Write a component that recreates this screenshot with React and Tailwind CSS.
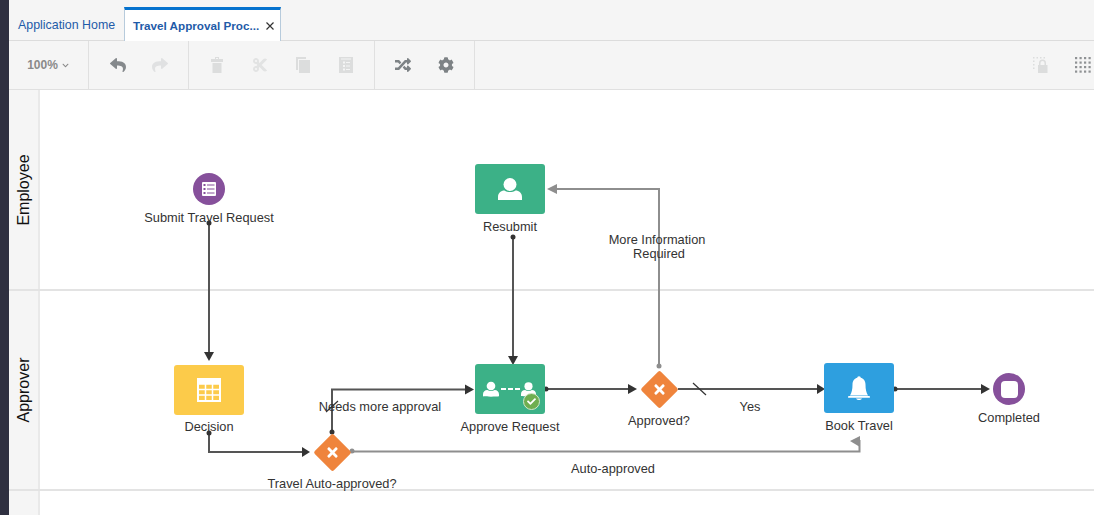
import React from 'react';
import { FaReply, FaShare, FaCut, FaRandom, FaCog, FaTimes, FaCheck, FaChevronDown } from 'react-icons/fa';

const FONT = "font-['Liberation_Sans',Arial,sans-serif]";

function Person({ className }) {
  return (
    <svg viewBox="0 0 24 22" className={className} fill="currentColor">
      <circle cx="12" cy="6.500" r="6.500" />
      <path d="M0 22v-3c0-4 3-6.500 6.500-6.500 1.500 1 3.500 1.500 5.500 1.500s4-.5 5.500-1.500c3.500 0 6.500 2.500 6.500 6.500v3c-4 .6-20 .6-24 0z" />
    </svg>
  );
}

function ListIcon({ className }) {
  return (
    <svg viewBox="0 0 14 14" className={className}>
      <rect x="0" y="0" width="14" height="14" rx="1" fill="#fff" />
      <rect x="1.500" y="2" width="2" height="2" fill="#86509b" />
      <rect x="1.500" y="6" width="2" height="2" fill="#86509b" />
      <rect x="1.500" y="10" width="2" height="2" fill="#86509b" />
      <rect x="5" y="2.500" width="7.500" height="1" fill="#86509b" />
      <rect x="5" y="6.500" width="7.500" height="1" fill="#86509b" />
      <rect x="5" y="10.500" width="7.500" height="1" fill="#86509b" />
    </svg>
  );
}

function TableIcon({ className }) {
  return (
    <svg viewBox="0 0 24 24" className={className}>
      <rect x="0" y="0" width="24" height="24" fill="#fff" />
      <rect x="2" y="6" width="20" height="16" fill="#fccb4a" />
      <path d="M2 6h20M2 11.500h20M2 17h20M8.500 6v16M15.500 6v16" stroke="#fff" strokeWidth="1.500" />
    </svg>
  );
}

function Bell({ className }) {
  return (
    <svg viewBox="0 0 22 24" className={className} fill="currentColor">
      <circle cx="11" cy="2" r="1.800" />
      <path d="M11 1.500c4 0 6.500 3 6.500 7 0 5 .8 8 2.500 11H2c1.700-3 2.500-6 2.500-11 0-4 2.500-7 6.500-7z" />
      <rect x="0" y="20" width="22" height="1.800" rx=".9" />
      <path d="M8 22.500h6c-.8 1-1.800 1.500-3 1.500s-2.200-.5-3-1.500z" />
    </svg>
  );
}

function TrashIcon({ className }) {
  return (
    <svg viewBox="0 0 16 16" className={className} fill="currentColor">
      <path fillRule="evenodd" d="M6 0h4v2h4v3H2V2h4zM7 1v1h2V1z" />
      <rect x="3.500" y="6" width="9" height="10" />
    </svg>
  );
}

function CopyIcon({ className }) {
  return (
    <svg viewBox="0 0 16 16" className={className} fill="currentColor">
      <path d="M1 0h10v2H3v11H1z" />
      <rect x="4" y="3" width="11" height="13" />
    </svg>
  );
}

function PasteIcon({ className }) {
  return (
    <svg viewBox="0 0 16 16" className={className} fill="currentColor">
      <path fillRule="evenodd" d="M1 0h14v16H1zM3 1.500v1h10v-1zM5 4.500v2h2v-2zM8 5v1h4V5zM5 8v2h2V8zM8 8.500v1h4v-1zM5 11.500v2h2v-2zM8 12v1h4v-1z" />
    </svg>
  );
}

function DotGrid({ className }) {
  const dots = [1, 5.500, 10, 14.500];
  return (
    <svg viewBox="0 0 16 16" className={className} fill="currentColor">
      {dots.map((y) => dots.map((x) => <rect key={`${x}-${y}`} x={x - 1} y={y - 1} width="2.200" height="2.200" />))}
    </svg>
  );
}

function LockGrid({ className }) {
  return (
    <svg viewBox="0 0 16 16" className={className} fill="currentColor">
      {[0, 3.500, 7, 10.500].map((x) => <rect key={x} x={x} y="0" width="1.500" height="1.500" />)}
      {[3.500, 7, 10.500].map((y) => <rect key={y} x="0" y={y} width="1.500" height="1.500" />)}
      <path fillRule="evenodd" d="M5 8h1V6a3.500 3.500 0 0 1 7 0v2h1.500v8H5zM7.500 8h4V6a2 2 0 0 0-4 0z" />
    </svg>
  );
}

function Diamond({ className }) {
  return (
    <div className={`absolute flex h-[27px] w-[27px] rotate-45 items-center justify-center rounded-[2px] bg-[#ef843c] ${className}`}>
      <FaTimes className="-rotate-45 text-[15px] text-white" />
    </div>
  );
}

function Label({ className, children }) {
  return (
    <div className={`absolute -translate-x-1/2 whitespace-nowrap text-center text-[12.8px] leading-[14px] text-[#333] ${className}`}>
      {children}
    </div>
  );
}

function Connectors() {
  const dark = '#555';
  const grey = '#8e8e8e';
  return (
    <svg viewBox="9 90 1085 425" className="absolute inset-0 h-full w-full">
      <g fill="none" stroke={grey} strokeWidth="2">
        <path d="M352 451.500H859.500V440" />
        <path d="M659 366V189H552" />
      </g>
      <g fill="none" stroke={dark} strokeWidth="2">
        <path d="M209 223V352" />
        <path d="M209 433V452H304" />
        <path d="M332 432V389.500H466" />
        <path d="M513 237V356" />
        <path d="M546 389H630" />
        <path d="M678 389H818" />
        <path d="M895 389H983" />
      </g>
      <g stroke="#333" strokeWidth="1.200">
        <path d="M326 412L338 401" />
        <path d="M693 383L706 395" />
      </g>
      <g fill="#333">
        <circle cx="209" cy="223" r="2.500" />
        <circle cx="209" cy="433" r="2.500" />
        <circle cx="332" cy="432" r="2.500" />
        <circle cx="513" cy="237" r="2.500" />
        <circle cx="546" cy="389" r="2.500" />
        <circle cx="895" cy="389" r="2.500" />
        <path d="M204 352h10l-5 9z" />
        <path d="M302 447v10l8-5z" />
        <path d="M465 384.500v10l9-5z" />
        <path d="M508 356h10l-5 9z" />
        <path d="M628 384v10l9-5z" />
        <path d="M817 384v10l8-5z" />
        <path d="M981 384v10l9-5z" />
      </g>
      <g fill={grey}>
        <circle cx="659" cy="366" r="2.500" />
        <circle cx="352" cy="451" r="2.500" />
        <path d="M557 184v10l-10-5z" />
        <path d="M860 436v11l-10-6z" />
      </g>
    </svg>
  );
}

function Diagram() {
  return (
    <div className="absolute inset-0">
      <Connectors />

      <div className="absolute left-[184px] top-[83px] flex h-[32px] w-[32px] items-center justify-center rounded-full bg-[#86509b]">
        <ListIcon className="h-[14px] w-[14px]" />
      </div>
      <Label className="left-[200px] top-[121px]">Submit Travel Request</Label>

      <div className="absolute left-[466px] top-[74px] flex h-[50px] w-[70px] items-center justify-center rounded-[3px] bg-[#3cb187]">
        <Person className="h-[22px] w-[24px] text-white" />
      </div>
      <Label className="left-[501px] top-[130px]">Resubmit</Label>

      <div className="absolute left-[165px] top-[275px] flex h-[50px] w-[70px] items-center justify-center rounded-[3px] bg-[#fccb4a]">
        <TableIcon className="h-[24px] w-[24px]" />
      </div>
      <Label className="left-[200px] top-[330px]">Decision</Label>

      <div className="absolute left-[466px] top-[274px] flex h-[50px] w-[70px] items-center rounded-[3px] bg-[#3cb187] pl-[8px]">
        <div className="flex items-center text-white">
          <Person className="h-[16px] w-[16px]" />
          <div className="ml-[2px] flex gap-[2px]">
            <div className="h-[2px] w-[5px] bg-white" />
            <div className="h-[2px] w-[5px] bg-white" />
            <div className="h-[2px] w-[5px] bg-white" />
          </div>
          <Person className="ml-[1px] h-[16px] w-[15px]" />
        </div>
        <div className="absolute left-[48px] top-[29px] flex h-[17px] w-[17px] items-center justify-center rounded-full border border-[#d5e8cc] bg-[#6fae50]">
          <FaCheck className="text-[9px] text-white" />
        </div>
      </div>
      <Label className="left-[501px] top-[330px]">Approve Request</Label>

      <div className="absolute left-[815px] top-[273px] flex h-[50px] w-[70px] items-center justify-center rounded-[3px] bg-[#2e9fdf]">
        <Bell className="h-[24px] w-[22px] text-white" />
      </div>
      <Label className="left-[850px] top-[329px]">Book Travel</Label>

      <div className="absolute left-[984px] top-[283px] flex h-[32px] w-[32px] items-center justify-center rounded-full bg-[#86509b]">
        <div className="h-[17px] w-[17px] rounded-[4px] bg-white" />
      </div>
      <Label className="left-[1000px] top-[321px]">Completed</Label>

      <Diamond className="left-[309.500px] top-[348.500px]" />
      <Label className="left-[323px] top-[387px]">Travel Auto-approved?</Label>
      <Diamond className="left-[636.500px] top-[285.500px]" />
      <Label className="left-[650px] top-[324px]">Approved?</Label>

      <Label className="left-[371px] top-[310px]">Needs more approval</Label>
      <Label className="left-[741px] top-[310px]">Yes</Label>
      <Label className="left-[604px] top-[372px]">Auto-approved</Label>
      <Label className="left-[648px] top-[143px]">More Information<br /><span className="pl-[4px]">Required</span></Label>
    </div>
  );
}

function Lane({ name, className }) {
  return (
    <div className={`flex ${className}`}>
      <div className="flex w-[31px] shrink-0 items-center justify-center border-r-2 border-[#e9e9e9] bg-[#f5f5f5] pl-[1px]">
        {name && <span className="-rotate-90 text-[16px] text-[#111]">{name}</span>}
      </div>
      <div className="flex-1 bg-white" />
    </div>
  );
}

function ToolGroup({ className, children }) {
  return <div className={`flex h-full items-center border-r border-[#e0e0e0] ${className}`}>{children}</div>;
}

export default function App() {
  return (
    <div className={`flex h-[515px] w-[1094px] overflow-hidden bg-white ${FONT}`}>
      <div className="w-[9px] shrink-0 bg-[#2f3040]" />
      <div className="flex min-w-0 flex-1 flex-col">
        <div className="flex h-[41px] shrink-0 items-end border-b border-[#dcdcdc] bg-[#f5f5f5]">
          <div className="flex h-[33px] w-[115px] items-center pl-[9px] pt-[3px] text-[12.400px] text-[#1f5ba8]">Application Home</div>
          <div className="-mb-px flex h-[34px] w-[157px] items-center border-x border-b-0 border-t-[3px] border-x-[#b7cbdc] border-t-[#0572ce] bg-white pl-[8px] text-[11.700px] font-bold text-[#1f5ba8]">
            <span>Travel Approval Proc...</span>
            <svg viewBox="0 0 8 8" className="ml-[7px] h-[8px] w-[8px]" stroke="#333" strokeWidth="1.200">
              <path d="M.5.500l7 7M7.500.500l-7 7" />
            </svg>
          </div>
        </div>

        <div className="flex h-[49px] shrink-0 items-center border-b border-[#e0e0e0] bg-[#f5f5f5]">
          <ToolGroup className="w-[80px] justify-center gap-[4px] pr-[1px] text-[#8a8a8a]">
            <span className="text-[12px] font-bold">100%</span>
            <FaChevronDown className="text-[7px]" />
          </ToolGroup>
          <ToolGroup className="w-[100px] gap-[26px] pl-[21px] text-[16px]">
            <FaReply className="text-[#85898c]" />
            <FaShare className="text-[#e0e1e2]" />
          </ToolGroup>
          <ToolGroup className="w-[186px] gap-[27px] pl-[20px] text-[#dcdddd]">
            <TrashIcon className="h-[16px] w-[16px]" />
            <FaCut className="text-[16px] text-[#e2e3e3]" />
            <CopyIcon className="h-[16px] w-[16px]" />
            <PasteIcon className="h-[16px] w-[16px]" />
          </ToolGroup>
          <ToolGroup className="w-[100px] gap-[27px] pl-[20px] text-[16px] text-[#7d8285]">
            <FaRandom />
            <FaCog />
          </ToolGroup>
          <div className="ml-auto flex items-center gap-[26px] pr-[3px]">
            <LockGrid className="h-[16px] w-[16px] text-[#dcdddd]" />
            <DotGrid className="h-[16px] w-[16px] text-[#8f9294]" />
          </div>
        </div>

        <div className="relative flex min-h-0 flex-1 flex-col">
          <Lane name="Employee" className="h-[201px] border-b-2 border-[#e3e3e3]" />
          <Lane name="Approver" className="h-[200px] border-b-2 border-[#e3e3e3]" />
          <Lane className="flex-1" />
          <Diagram />
        </div>
      </div>
    </div>
  );
}
